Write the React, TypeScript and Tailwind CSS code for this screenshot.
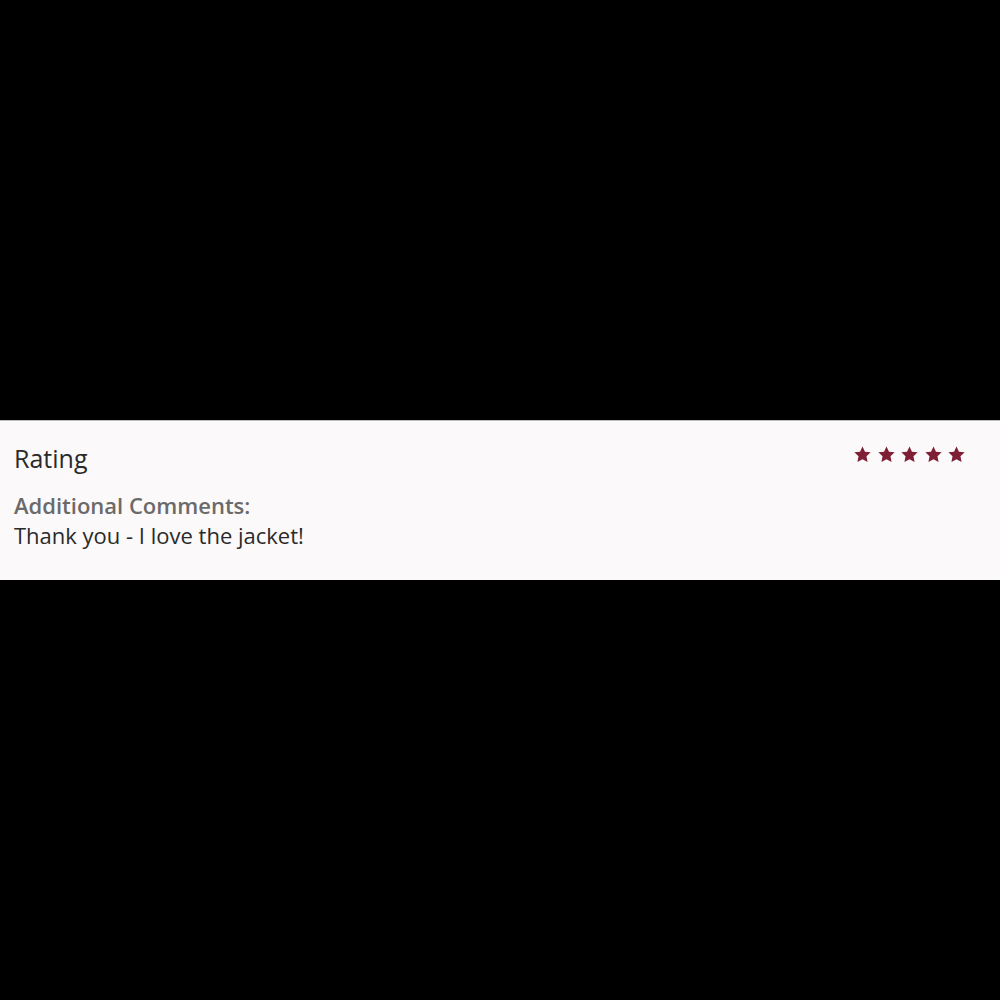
const Star = () => (
  <svg viewBox="0 0 24 24" className="w-[19px] h-[19px]" fill="#7e1f35">
    <path d="M12 1.8l3.1 6.6 7.2.9-5.3 5 1.4 7.1L12 17.9l-6.4 3.5 1.4-7.1-5.3-5 7.2-.9z" />
  </svg>
)

const App = () => {
  return (
    <div className="min-h-screen bg-black flex items-center" style={{ fontFamily: '"Open Sans", Lato, sans-serif' }}>
      <div className="w-full h-[160px] bg-[#fbf9fa] border-t border-[#bdbdbd] pl-[14px] pr-[34px] pt-[21px]">
        <div className="flex justify-between items-start">
          <h2 className="text-[25px] leading-[32px] text-[#2a2a2a]">Rating</h2>
          <div className="flex gap-[4.5px] mt-[3px]">
            <Star />
            <Star />
            <Star />
            <Star />
            <Star />
          </div>
        </div>
        <p className="mt-[17px] text-[22px] leading-[28px] font-semibold text-[#6b6a6a]">Additional Comments:</p>
        <p className="mt-[1px] text-[22px] leading-[30px] text-[#2a2a2a]">Thank you - I love the jacket!</p>
      </div>
    </div>
  )
}

export default App
